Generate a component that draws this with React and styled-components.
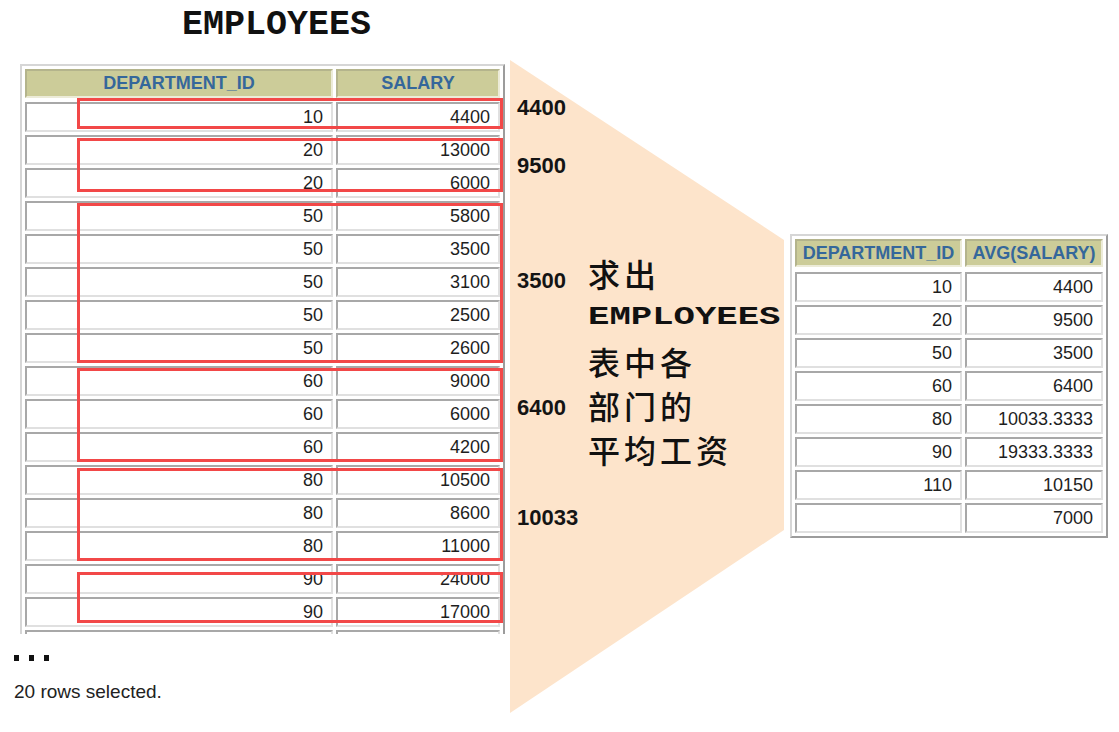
import React from 'react';
import styled, { createGlobalStyle } from 'styled-components';

const GlobalStyle = createGlobalStyle`
  body {
    margin: 0;
    background: #fff;
    font-family: "Liberation Sans", Arial, sans-serif;
  }
`;

// last row is only peeking out under the clip, so its values stay blank
const employees = [
  [10, 4400], [20, 13000], [20, 6000], [50, 5800], [50, 3500], [50, 3100],
  [50, 2500], [50, 2600], [60, 9000], [60, 6000], [60, 4200], [80, 10500],
  [80, 8600], [80, 11000], [90, 24000], [90, 17000], ['', ''],
];

// red outlines around each department's rows (offsets inside the clip box)
const groups = [
  { top: 34, h: 31 },
  { top: 74, h: 54 },
  { top: 139, h: 160 },
  { top: 304, h: 94 },
  { top: 404, h: 93 },
  { top: 508, h: 51 },
];

const averages = [
  [10, '4400'], [20, '9500'], [50, '3500'], [60, '6400'],
  [80, '10033.3333'], [90, '19333.3333'], [110, '10150'], ['', '7000'],
];

const labels = [
  { text: '4400', gap: 35 },
  { text: '9500', gap: 32 },
  { text: '3500', gap: 89 },
  { text: '6400', gap: 101 },
  { text: '10033', gap: 84 },
];

const Page = styled.div`
  display: flex;
  align-items: flex-start;
  width: 1119px;
  height: 732px;
  padding: 5px 0 0 14px;
  box-sizing: border-box;
  overflow: hidden;
`;

const LeftCol = styled.div`
  display: flex;
  flex-direction: column;
  width: 491px;
  flex-shrink: 0;
`;

const Title = styled.h1`
  margin: 0 0 0 168px;
  font: bold 35px/40px "Liberation Mono", "Courier New", monospace;
  color: #111;
`;

const TableClip = styled.div`
  position: relative;
  margin: 19px 0 0 6px;
  height: 570px;
  overflow: hidden;
`;

const Grid = styled.div`
  display: grid;
  grid-template-columns: ${p => p.$cols};
  grid-auto-rows: ${p => p.$row}px;
  gap: 3px;
  padding: 3px;
  width: fit-content;
  border: 2px solid;
  border-color: #d6d6d6 #9c9c9c #9c9c9c #d6d6d6;
  background: #fff;
`;

const HeadCell = styled.div`
  height: ${p => p.$h}px;
  display: flex;
  align-items: center;
  justify-content: center;
  background: #cccc99;
  border: 2px solid;
  border-color: #b4b48c #ecebd8 #ecebd8 #b4b48c;
  box-sizing: border-box;
  font-size: 18px;
  font-weight: bold;
  color: #35679b;
  white-space: nowrap;
  overflow: hidden;
`;

const Cell = styled.div`
  display: flex;
  align-items: center;
  justify-content: flex-end;
  padding-right: 8px;
  border: 2px solid;
  border-color: #a8a8a8 #e0e0e0 #e0e0e0 #a8a8a8;
  box-sizing: border-box;
  font-size: 18px;
  color: #1e1e1e;
`;

const GroupBox = styled.div`
  position: absolute;
  left: 57px;
  width: 426px;
  top: ${p => p.$top}px;
  height: ${p => p.$h}px;
  border: 3px solid #f24848;
  box-sizing: border-box;
  pointer-events: none;
`;

const Dots = styled.div`
  display: flex;
  gap: 10px;
  margin-top: 21px;

  span {
    width: 5px;
    height: 6px;
    background: #111;
  }
`;

const Footer = styled.div`
  margin-top: 20px;
  font-size: 19px;
  line-height: 22px;
  color: #222;
`;

const Funnel = styled.div`
  display: flex;
  flex-shrink: 0;
  width: 274px;
  height: 653px;
  margin: 55px 0 0 5px;
  padding-left: 7px;
  box-sizing: border-box;
  background: #fde4cb;
  clip-path: polygon(0 0, 100% 180px, 100% 470px, 0 100%);
`;

const Labels = styled.div`
  display: flex;
  flex-direction: column;
  width: 71px;
  flex-shrink: 0;
`;

const Label = styled.div`
  margin-top: ${p => p.$gap}px;
  font-size: 22px;
  line-height: 26px;
  font-weight: bold;
  color: #141414;
`;

const Note = styled.div`
  display: flex;
  flex-direction: column;
  padding-top: 191px;
`;

const NoteLine = styled.div`
  font-family: "Noto Sans CJK SC", "Liberation Sans", sans-serif;
  font-size: 32px;
  line-height: 44px;
  font-weight: 500;
  letter-spacing: 4px;
  color: #111;
  white-space: nowrap;
`;

const MonoLine = styled.div`
  height: 44px;
  display: flex;
  align-items: center;

  span {
    display: inline-block;
    font: bold 26px/1 "Liberation Mono", "Courier New", monospace;
    color: #111;
    transform: scaleX(1.37);
    transform-origin: left center;
  }
`;

const RightCol = styled.div`
  margin: 229px 0 0 6px;
`;

export default function App() {
  return (
    <Page>
      <GlobalStyle />
      <LeftCol>
        <Title>EMPLOYEES</Title>
        <TableClip>
          <Grid $cols="308px 164px" $row={30}>
            <HeadCell $h={29}>DEPARTMENT_ID</HeadCell>
            <HeadCell $h={29}>SALARY</HeadCell>
            {employees.map(([dept, sal], i) => (
              <React.Fragment key={i}>
                <Cell>{dept}</Cell>
                <Cell>{sal}</Cell>
              </React.Fragment>
            ))}
          </Grid>
          {groups.map((g, i) => (
            <GroupBox key={i} $top={g.top} $h={g.h} />
          ))}
        </TableClip>
        <Dots>
          <span />
          <span />
          <span />
        </Dots>
        <Footer>20 rows selected.</Footer>
      </LeftCol>

      <Funnel>
        <Labels>
          {labels.map(l => (
            <Label key={l.text} $gap={l.gap}>{l.text}</Label>
          ))}
        </Labels>
        <Note>
          <NoteLine>求出</NoteLine>
          <MonoLine><span>EMPLOYEES</span></MonoLine>
          <NoteLine>表中各</NoteLine>
          <NoteLine>部门的</NoteLine>
          <NoteLine>平均工资</NoteLine>
        </Note>
      </Funnel>

      <RightCol>
        <Grid $cols="167px 138px" $row={30}>
          <HeadCell $h={28}>DEPARTMENT_ID</HeadCell>
          <HeadCell $h={28}>AVG(SALARY)</HeadCell>
          {averages.map(([dept, avg], i) => (
            <React.Fragment key={i}>
              <Cell>{dept}</Cell>
              <Cell>{avg}</Cell>
            </React.Fragment>
          ))}
        </Grid>
      </RightCol>
    </Page>
  );
}
